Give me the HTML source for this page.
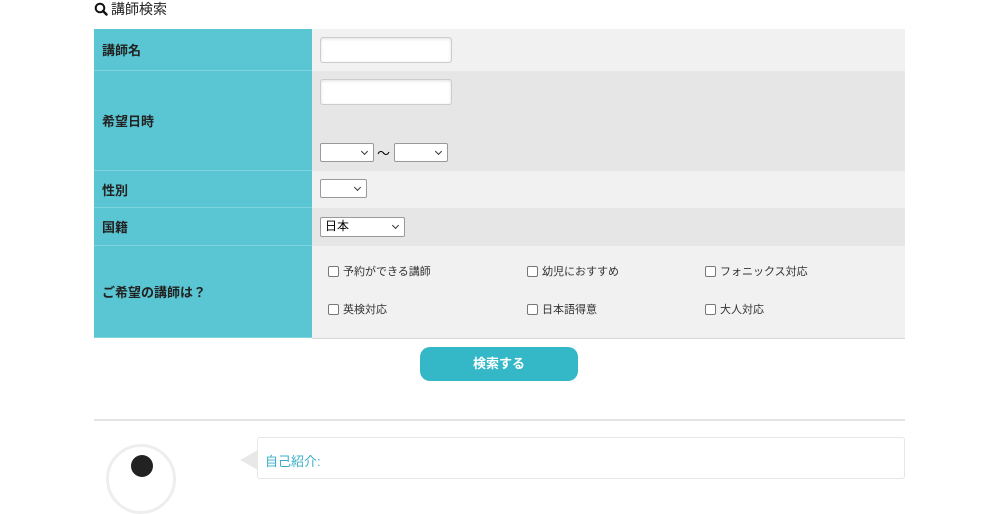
<!DOCTYPE html><html><head><meta charset="utf-8"><style>
body{margin:0;width:1000px;height:461px;overflow:hidden;background:#fff;font-family:"Liberation Sans","Noto Sans CJK JP",sans-serif;position:relative}
.a{position:absolute}
.l{position:absolute;left:94px;width:218px;background:#5bc6d3;font-weight:bold;font-size:13px;color:#222;display:flex;align-items:center;padding-left:8px;box-sizing:border-box;border-bottom:1px solid #7fd3dd}
.r{position:absolute;left:312px;width:593px;border-bottom:1px solid #d6d6d6}
.in{position:absolute;width:130px;height:24px;background:#fff;border:1px solid #ccc;border-radius:3px;box-shadow:inset 0 1px 3px rgba(0,0,0,.12)}
.sel{position:absolute;height:19px;background:#fff;border:1px solid #999;border-radius:2px;font-size:12px;box-sizing:border-box;padding-left:4px;line-height:17px}
.sel:after{content:"";position:absolute;right:6px;top:5px;width:4px;height:4px;border-right:1.5px solid #333;border-bottom:1.5px solid #333;transform:rotate(45deg)}
.cb{position:absolute;font-size:11px;color:#333;display:flex;align-items:center}
.cb i{display:inline-block;width:9px;height:9px;border:1px solid #777;border-radius:2px;margin-right:4px;background:#fff}
</style></head><body>
<svg class="a" style="left:94px;top:2px" width="14" height="14" viewBox="0 0 14 14"><circle cx="6" cy="6" r="4.3" fill="none" stroke="#111" stroke-width="2"/><path d="M9 9l3.5 3.5" stroke="#111" stroke-width="2.4" stroke-linecap="round"/></svg>
<div class="a" style="left:111px;top:-1px;font-size:14px;color:#222">講師検索</div>
<div class="l" style="top:29px;height:42px">講師名</div>
<div class="r" style="top:29px;height:42px;background:#f1f1f1"><div class="in" style="left:8px;top:8px"></div></div>
<div class="l" style="top:71px;height:100px">希望日時</div>
<div class="r" style="top:71px;height:100px;background:#e6e6e6"><div class="in" style="left:8px;top:8px"></div>
<div class="sel" style="left:8px;top:72px;width:54px"></div><div class="a" style="left:65px;top:72px;font-size:13px">〜</div><div class="sel" style="left:82px;top:72px;width:54px"></div></div>
<div class="l" style="top:171px;height:37px">性別</div>
<div class="r" style="top:171px;height:37px;background:#f1f1f1"><div class="sel" style="left:8px;top:8px;width:47px"></div></div>
<div class="l" style="top:208px;height:38px">国籍</div>
<div class="r" style="top:208px;height:38px;background:#e6e6e6"><div class="sel" style="left:8px;top:9px;width:85px;height:20px">日本</div></div>
<div class="l" style="top:246px;height:92px">ご希望の講師は？</div>
<div class="r" style="top:246px;height:92px;background:#f1f1f1">
<div class="cb" style="left:16px;top:17px"><i></i>予約ができる講師</div>
<div class="cb" style="left:215px;top:17px"><i></i>幼児におすすめ</div>
<div class="cb" style="left:393px;top:17px"><i></i>フォニックス対応</div>
<div class="cb" style="left:16px;top:55px"><i></i>英検対応</div>
<div class="cb" style="left:215px;top:55px"><i></i>日本語得意</div>
<div class="cb" style="left:393px;top:55px"><i></i>大人対応</div></div>
<div class="a" style="left:420px;top:347px;width:158px;height:34px;background:#34b8c8;border-radius:10px;color:#fff;font-weight:bold;font-size:13px;text-align:center;line-height:34px">検索する</div>
<div class="a" style="left:94px;top:419px;width:811px;height:2px;background:#e4e4e4"></div>
<div class="a" style="left:106px;top:444px;width:70px;height:70px;border-radius:50%;border:3px solid #eee;box-sizing:border-box;background:#fff"><div class="a" style="left:22px;top:8px;width:22px;height:22px;border-radius:50%;background:#222"></div></div>
<div class="a" style="left:257px;top:437px;width:646px;height:40px;border:1px solid #e6e6e6;border-radius:3px;background:#fff"></div>
<div class="a" style="left:240px;top:450px;width:0;height:0;border-top:10px solid transparent;border-right:18px solid #e8e8e8;border-bottom:10px solid transparent"></div>
<div class="a" style="left:265px;top:451px;font-size:13px;color:#3aaec8">自己紹介:</div>
</body></html>
